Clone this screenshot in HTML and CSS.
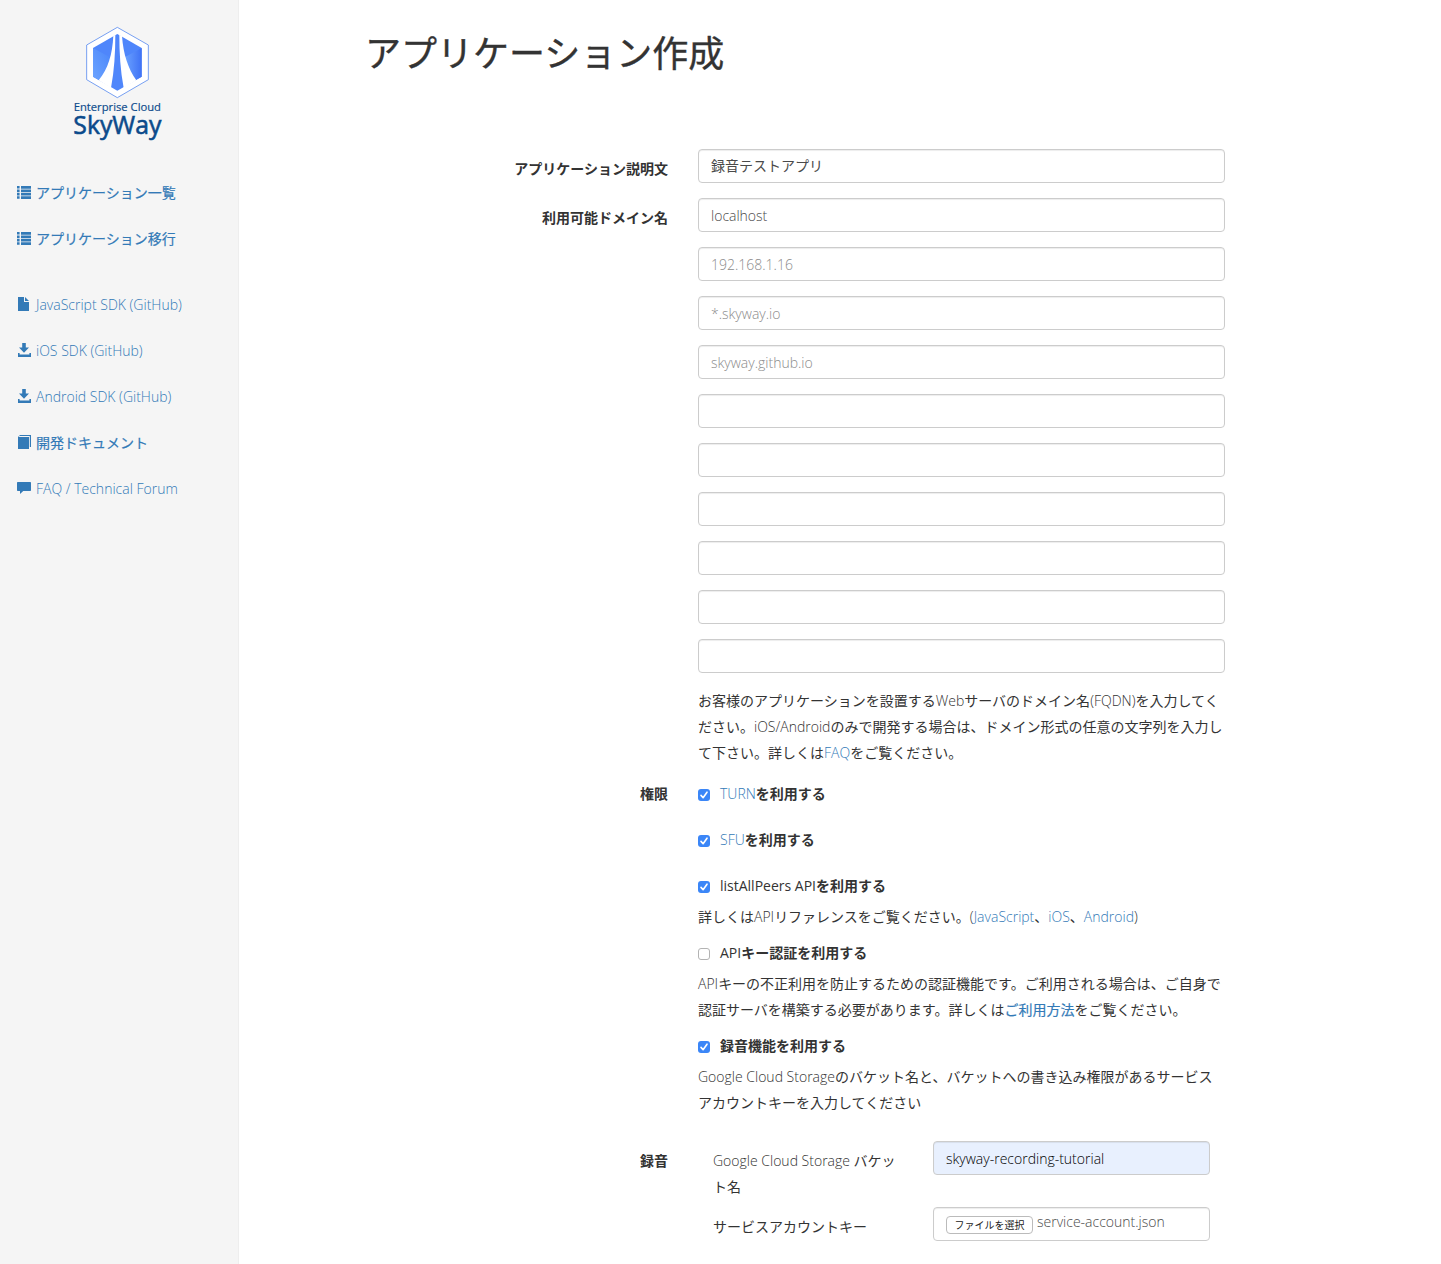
FILE: index.html
```html
<!DOCTYPE html>
<html lang="ja">
<head>
<meta charset="utf-8">
<title>アプリケーション作成</title>
<link rel="stylesheet" href="styles.css">
</head>
<body>
<div class="layout">
  <aside class="sidebar">
    <svg class="logo" viewBox="0 0 360 405" role="img" aria-label="Enterprise Cloud SkyWay">
      <defs>
        <linearGradient id="left" x1="0" x2="1" y1="1" y2="0"><stop offset="0" stop-color="#6da4ff"/><stop offset="1" stop-color="#4a86fa"/></linearGradient>
        <linearGradient id="right" x1="0" x2="1" y1="0" y2="0"><stop offset="0" stop-color="#6ba2ff"/><stop offset="1" stop-color="#3f72f5"/></linearGradient>
      </defs>
      <path d="M172 37 265 90V194L172 248 80 194V90Z" fill="#fff" stroke="#5b8def" stroke-width="2.5"/>
      <path d="M172 57 245 99V185L172 227 99 185V99Z" fill="#4f86fb"/>
      <path d="M99 99 150 127V190L122 198 99 185Z" fill="url(#left)"/>
      <path d="M245 99 194 127V190L222 198 245 185Z" fill="url(#right)"/>
      <path d="M160 62C157 118 145 160 116 196L153 219C163 166 166 112 166 59ZM178 59C178 112 181 166 191 219L229 196C204 160 190 118 186 63Z" fill="#fff"/>
      <text class="logo-sub" x="41" y="287" textLength="262" lengthAdjust="spacingAndGlyphs">Enterprise Cloud</text>
      <text class="logo-name" x="40" y="358" textLength="264" lengthAdjust="spacingAndGlyphs">SkyWay</text>
    </svg>
    <nav class="nav">
      <a class="ja" href="#"><svg class="icon" viewBox="0 0 14 14"><path d="M0 1h2.6v2.6H0zM4 1h10v2.7H4zM0 4.4h2.6v2.6H0zM4 4.4h10v2.7H4zM0 7.8h2.6v2.6H0zM4 7.8h10v2.7H4zM0 11.2h2.6v2.6H0zM4 11.2h10v2.7H4z"/></svg>アプリケーション一覧</a>
      <a class="ja" href="#"><svg class="icon" viewBox="0 0 14 14"><path d="M0 1h2.6v2.6H0zM4 1h10v2.7H4zM0 4.4h2.6v2.6H0zM4 4.4h10v2.7H4zM0 7.8h2.6v2.6H0zM4 7.8h10v2.7H4zM0 11.2h2.6v2.6H0zM4 11.2h10v2.7H4z"/></svg>アプリケーション移行</a>
    </nav>
    <nav class="nav">
      <a class="en" href="#"><svg class="icon" viewBox="0 0 14 14"><path d="M1 0h6v5h5v9H1zM8 0l4 4H8z"/></svg>JavaScript SDK (GitHub)</a>
      <a class="en" href="#"><svg class="icon" viewBox="0 0 14 14"><path d="M5.2 0h3.6v4.6h3.2L7 9.8 2 4.6h3.2zM1 10h1.6v1.6h9.8V10H14v4H1z"/></svg>iOS SDK (GitHub)</a>
      <a class="en" href="#"><svg class="icon" viewBox="0 0 14 14"><path d="M5.2 0h3.6v4.6h3.2L7 9.8 2 4.6h3.2zM1 10h1.6v1.6h9.8V10H14v4H1z"/></svg>Android SDK (GitHub)</a>
      <a class="ja" href="#"><svg class="icon" viewBox="0 0 14 14"><path d="M3 0h11v12h-1.2V1H2.4L1.8 2H12v12H1V2z"/></svg>開発ドキュメント</a>
      <a class="en" href="#"><svg class="icon" viewBox="0 0 14 14"><path d="M.7 1h12.6q.7 0 .7.7v7.6q0 .7-.7.7H6.2L3 13V10H.7Q0 10 0 9.3V1.7Q0 1 .7 1z"/></svg>FAQ / Technical Forum</a>
    </nav>
  </aside>
  <main class="main">
    <h1 class="title">アプリケーション作成</h1>
    <form class="form">
      <label class="label">アプリケーション説明文</label>
      <div class="fields"><input class="input input-ja" type="text" value="録音テストアプリ"></div>

      <label class="label">利用可能ドメイン名</label>
      <div class="fields">
        <input class="input" type="text" value="localhost">
        <input class="input" type="text" placeholder="192.168.1.16">
        <input class="input" type="text" placeholder="*.skyway.io">
        <input class="input" type="text" placeholder="skyway.github.io">
        <input class="input" type="text">
        <input class="input" type="text">
        <input class="input" type="text">
        <input class="input" type="text">
        <input class="input" type="text">
        <input class="input" type="text">
        <p class="help">お客様のアプリケーションを設置する<span class="en">Web</span>サーバのドメイン名<span class="en">(FQDN)</span>を入力してください。<span class="en">iOS/Android</span>のみで開発する場合は、ドメイン形式の任意の文字列を入力して下さい。詳しくは<a class="en" href="#">FAQ</a>をご覧ください。</p>
      </div>

      <label class="label label-plain">権限</label>
      <div class="permissions">
        <label class="check spaced"><span class="box on"><svg viewBox="0 0 12 12"><path d="M3 6.4 5.1 8.7 9 3.2"/></svg></span><span><a class="en" href="#">TURN</a><b>を利用する</b></span></label>
        <label class="check spaced"><span class="box on"><svg viewBox="0 0 12 12"><path d="M3 6.4 5.1 8.7 9 3.2"/></svg></span><span><a class="en" href="#">SFU</a><b>を利用する</b></span></label>
        <label class="check"><span class="box on"><svg viewBox="0 0 12 12"><path d="M3 6.4 5.1 8.7 9 3.2"/></svg></span><span>listAllPeers API<b>を利用する</b></span></label>
        <p class="help">詳しくは<span class="en">API</span>リファレンスをご覧ください。<span class="en">(<a href="#">JavaScript</a></span>、<a class="en" href="#">iOS</a>、<span class="en"><a href="#">Android</a>)</span></p>
        <label class="check"><span class="box"></span><span>API<b>キー認証を利用する</b></span></label>
        <p class="help"><span class="en">API</span>キーの不正利用を防止するための認証機能です。ご利用される場合は、ご自身で認証サーバを構築する必要があります。詳しくは<a class="ja" href="#">ご利用方法</a>をご覧ください。</p>
        <label class="check"><span class="box on"><svg viewBox="0 0 12 12"><path d="M3 6.4 5.1 8.7 9 3.2"/></svg></span><span><b>録音機能を利用する</b></span></label>
        <p class="help"><span class="en">Google Cloud Storage</span>のバケット名と、バケットへの書き込み権限があるサービスアカウントキーを入力してください</p>
      </div>

      <label class="label">録音</label>
      <div class="recording">
        <label class="sub-label"><span class="en">Google Cloud Storage</span> バケット名</label>
        <input class="input filled" type="text" value="skyway-recording-tutorial">
        <label class="sub-label">サービスアカウントキー</label>
        <div class="input file"><button class="choose" type="button">ファイルを選択</button><span>service-account.json</span></div>
      </div>
    </form>
  </main>
</div>
</body>
</html>
```
FILE: styles.css
```css
* { box-sizing: border-box; }
body {
  margin: 0;
  color: #333;
  background: #fff;
  font: 400 14px/26px "Open Sans", "Noto Sans CJK JP", sans-serif;
}
a { color: #337ab7; text-decoration: none; }
b { font-weight: 700; }
.en { font-weight: 300; }
.ja { font-weight: 400; -webkit-text-stroke: .2px currentColor; }

.layout { display: flex; height: 1264px; overflow: hidden; }
.sidebar {
  flex: 0 0 239px;
  padding-top: 15px;
  background: #f5f5f5;
  border-right: 1px solid #eee;
}
.logo { display: block; width: 120px; height: 135px; margin: 0 0 20px 60px; }
.logo text { fill: #0b4a8b; stroke: #0b4a8b; font-family: "Open Sans", sans-serif; }
.logo-sub { font-size: 35px; stroke-width: .5px; }
.logo-name { font-size: 78px; stroke-width: 1.8px; }
.nav { margin-bottom: 20px; }
.nav a { display: flex; align-items: center; gap: 5px; padding: 10px 17px; }
.icon { width: 14px; height: 14px; margin-bottom: 2px; fill: currentColor; }

.main { flex: 1; padding: 27px 0 0 127px; }
.title {
  margin: 0 0 68px -1px;
  font-size: 36px;
  font-weight: 400;
  line-height: 54px;
  -webkit-text-stroke: .35px currentColor;
}
.form {
  display: grid;
  grid-template-columns: 302px 527px;
  column-gap: 30px;
  row-gap: 15px;
}
.label { padding-top: 7px; font-weight: 700; text-align: right; }
.label-plain { padding-top: 0; }
.fields { display: flex; flex-direction: column; gap: 15px; }
.input {
  display: block;
  width: 100%;
  height: 34px;
  padding: 6px 12px;
  color: #4a4a4a;
  background: #fff;
  border: 1px solid #ccc;
  border-radius: 4px;
  box-shadow: inset 0 1px 1px rgba(0, 0, 0, .075);
  font: inherit;
  font-weight: 300;
  line-height: 20px;
}
.input::placeholder { color: #8c8c8c; opacity: 1; }
.input-ja { padding: 5px 12px 7px; font-weight: 400; }
.help { margin: 0; }

.check { display: flex; gap: 10px; }
.spaced { margin-bottom: 20px; }
.box {
  width: 12px;
  height: 12px;
  margin-top: 8px;
  background: #fff;
  border: 1px solid #b3b3b3;
  border-radius: 3px;
}
.box.on { background: #3b86f7; border: 0; }
.box svg { display: block; fill: none; stroke: #fff; stroke-width: 1.6; stroke-linecap: round; stroke-linejoin: round; }
.permissions .help { margin: 5px 0 10px; }

.recording {
  display: grid;
  grid-template-columns: 190px 277px;
  column-gap: 30px;
  row-gap: 7px;
  padding: 0 15px;
}
.sub-label { padding-top: 7px; }
.filled { color: #000; background: #e8f0fe; }
.file { display: flex; gap: 4px; padding-top: 5px; line-height: 17px; }
.choose {
  width: 87px;
  height: 18px;
  margin-top: 3px;
  padding: 0;
  color: #222;
  background: #fff;
  border: 1px solid #bbb;
  border-radius: 4px;
  font: 400 10px/15px "Open Sans", "Noto Sans CJK JP", sans-serif;
}
```
